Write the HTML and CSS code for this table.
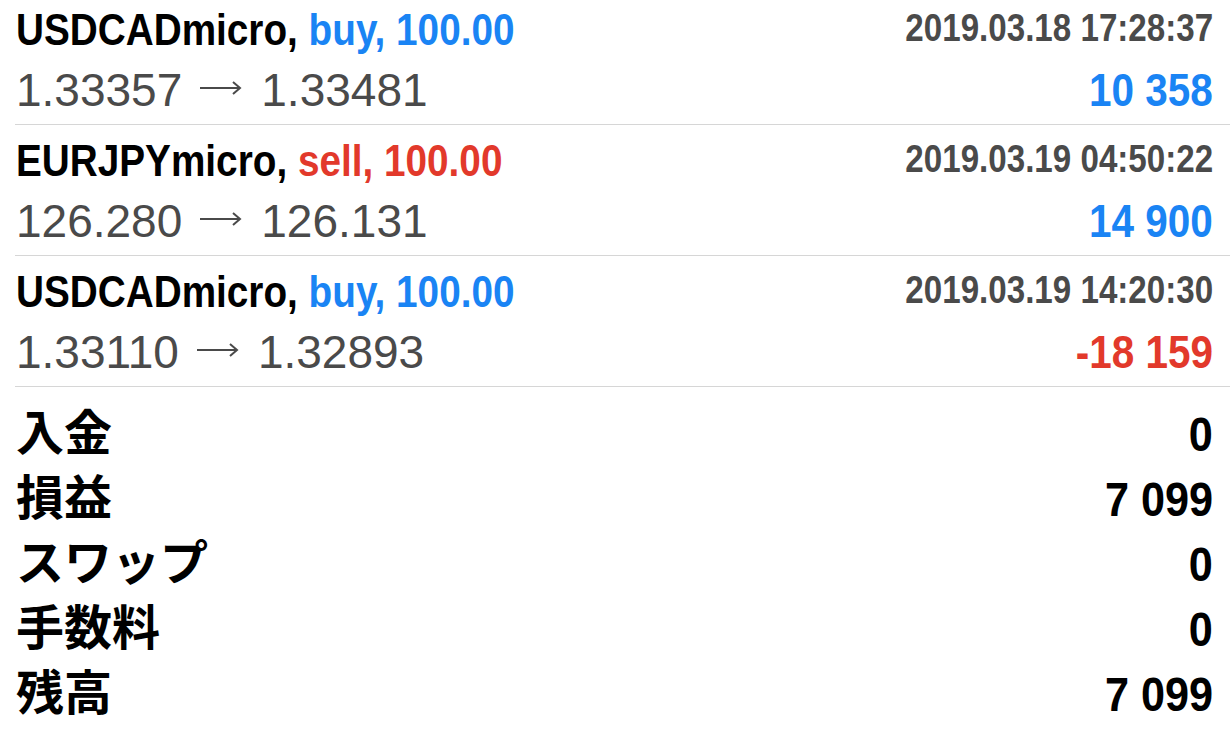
FILE: index.html
```html
<!DOCTYPE html>
<html lang="ja">
<head>
<meta charset="utf-8">
<title>History</title>
<link rel="stylesheet" href="styles.css">
</head>
<body>
<div class="page">
  <div class="deals">
    <div class="deal deal-first">
      <div class="line-top">
        <span class="cond title">USDCADmicro, <span class="buy">buy, 100.00</span></span>
        <span class="cond date">2019.03.18 17:28:37</span>
      </div>
      <div class="line-bottom">
        <span class="prices">1.33357<svg class="arrow" width="42" height="14" viewBox="0 0 42 14" aria-label="→"><path d="M0 7H40M33 1L40 7L33 13" fill="none" stroke="#4a4a4a" stroke-width="2"/></svg>1.33481</span>
        <span class="cond profit buy">10 358</span>
      </div>
    </div>
    <div class="deal">
      <div class="line-top">
        <span class="cond title">EURJPYmicro, <span class="sell">sell, 100.00</span></span>
        <span class="cond date">2019.03.19 04:50:22</span>
      </div>
      <div class="line-bottom">
        <span class="prices">126.280<svg class="arrow" width="42" height="14" viewBox="0 0 42 14" aria-label="→"><path d="M0 7H40M33 1L40 7L33 13" fill="none" stroke="#4a4a4a" stroke-width="2"/></svg>126.131</span>
        <span class="cond profit buy">14 900</span>
      </div>
    </div>
    <div class="deal">
      <div class="line-top">
        <span class="cond title">USDCADmicro, <span class="buy">buy, 100.00</span></span>
        <span class="cond date">2019.03.19 14:20:30</span>
      </div>
      <div class="line-bottom">
        <span class="prices">1.33110<svg class="arrow" width="42" height="14" viewBox="0 0 42 14" aria-label="→"><path d="M0 7H40M33 1L40 7L33 13" fill="none" stroke="#4a4a4a" stroke-width="2"/></svg>1.32893</span>
        <span class="cond profit sell">-18 159</span>
      </div>
    </div>
  </div>
  <div class="summary">
    <div class="sum-row"><span class="label">入金</span><span class="cond value">0</span></div>
    <div class="sum-row"><span class="label">損益</span><span class="cond value">7 099</span></div>
    <div class="sum-row"><span class="label">スワップ</span><span class="cond value">0</span></div>
    <div class="sum-row"><span class="label">手数料</span><span class="cond value">0</span></div>
    <div class="sum-row"><span class="label">残高</span><span class="cond value">7 099</span></div>
  </div>
</div>
</body>
</html>
```
FILE: styles.css
```css
html, body {
  margin: 0;
  padding: 0;
  background: #ffffff;
}
body {
  width: 1230px;
  height: 738px;
  overflow: hidden;
  font-family: "Liberation Sans", Arial, sans-serif;
  color: #000;
}
.page {
  display: flex;
  flex-direction: column;
}
.deals {
  display: flex;
  flex-direction: column;
  margin-top: -6px;
}
.deal {
  margin-left: 15px;
  padding: 10px 17px 6px 1px;
  height: 114px;
  border-bottom: 1px solid #d6d6d6;
  display: flex;
  flex-direction: column;
  gap: 6px;
}
.cond {
  display: inline-block;
  font-weight: 700;
  white-space: nowrap;
  transform: scaleX(0.88);
  transform-origin: left center;
}
.line-top {
  display: flex;
  justify-content: space-between;
  align-items: flex-start;
  height: 52px;
}
.title {
  font-size: 44px;
  line-height: 52px;
  color: #000;
}
.date {
  font-size: 39px;
  line-height: 47px;
  color: #4a4a4a;
  transform: scaleX(0.85);
  transform-origin: right center;
}
.line-bottom {
  display: flex;
  justify-content: space-between;
  align-items: baseline;
  height: 56px;
}
.prices {
  font-size: 46px;
  line-height: 56px;
  color: #4a4a4a;
  white-space: nowrap;
}
.arrow {
  display: inline-block;
  vertical-align: 11px;
  margin: 0 19px 0 18px;
}
.profit {
  font-size: 46px;
  line-height: 56px;
  transform-origin: right center;
}
.buy {
  color: #1a84f4;
}
.sell {
  color: #e2392b;
}
.summary {
  display: flex;
  flex-direction: column;
  padding: 13px 17px 0 16px;
}
.sum-row {
  display: flex;
  justify-content: space-between;
  align-items: center;
  height: 65px;
}
.label {
  font-family: "Noto Sans CJK JP", "Noto Sans CJK SC", sans-serif;
  font-weight: 700;
  font-size: 48px;
  line-height: 65px;
  padding-bottom: 6px;
}
.value {
  font-size: 48px;
  line-height: 65px;
  padding-top: 3px;
  color: #000;
  transform: scaleX(0.9);
  transform-origin: right center;
}
```
